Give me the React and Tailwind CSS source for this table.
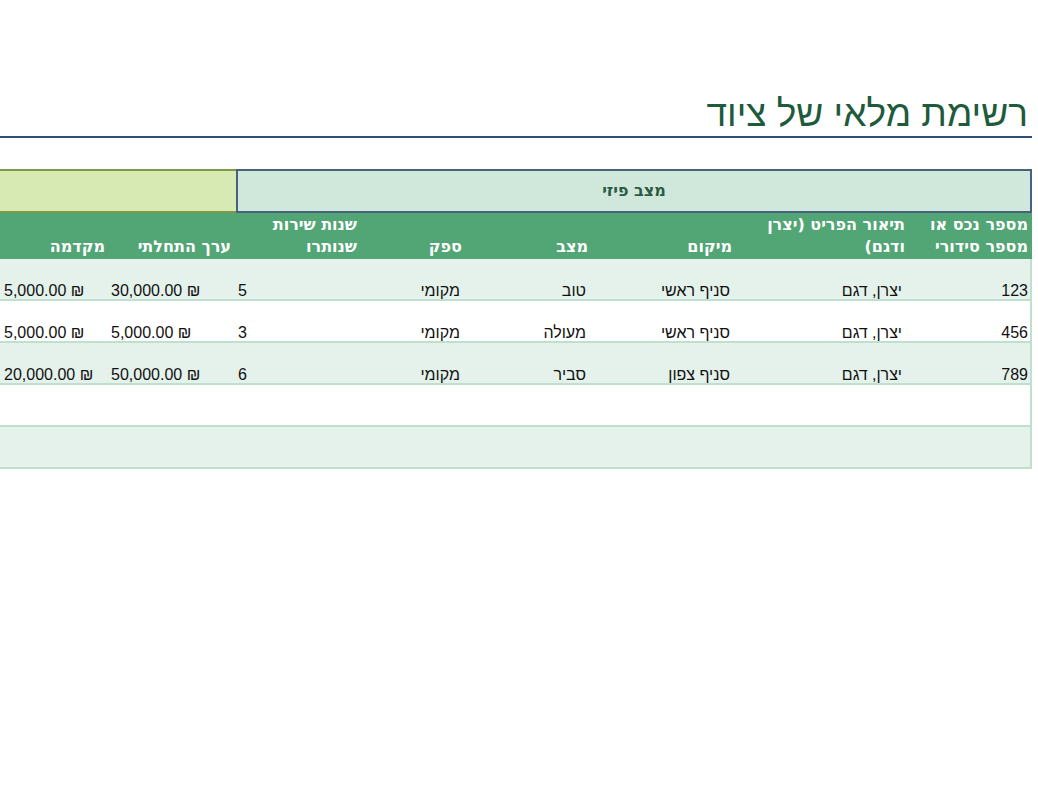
import React from "react";

const cols = "grid grid-cols-[123px_173px_144px_126px_104px_126px_126px_110px]";

const rows = [
  ["123", "יצרן, דגם", "סניף ראשי", "טוב", "מקומי", "5", "30,000.00 ₪", "5,000.00 ₪"],
  ["456", "יצרן, דגם", "סניף ראשי", "מעולה", "מקומי", "3", "5,000.00 ₪", "5,000.00 ₪"],
  ["789", "יצרן, דגם", "סניף צפון", "סביר", "מקומי", "6", "50,000.00 ₪", "20,000.00 ₪"],
  ["", "", "", "", "", "", "", ""],
  ["", "", "", "", "", "", "", ""],
];

const headFont = { fontFamily: '"DejaVu Sans", "Liberation Sans", sans-serif' };

export default function App() {
  return (
    <div
      dir="rtl"
      className="w-[1038px] h-[800px] bg-white overflow-hidden"
      style={{ fontFamily: '"Liberation Sans", "DejaVu Sans", sans-serif' }}
    >
      <div className="w-[1032px] mr-[6px] pt-[92px]">
        <h1 className="text-[37px] leading-[44px] text-[#1e5a3c] pr-[4px] font-normal">
          רשימת מלאי של ציוד
        </h1>
        <div className="h-[2px] bg-[#2f4c7c]" />
        <div className="mt-[31px] flex h-[44px]">
          <div
            className="w-[796px] bg-[#d0e8dc] border-2 border-[#46627c] flex items-center justify-center text-[16px] font-bold text-[#2c5a44]"
            style={headFont}
          >
            מצב פיזי
          </div>
          <div className="w-[236px] bg-[#d8eab4] border-y-2 border-[#7f9a45]" />
        </div>
        <div
          className={`${cols} bg-[#52a575] h-[46px] text-white font-bold text-[16px] leading-[22px]`}
          style={headFont}
        >
          <div className="flex items-end pr-[4px] pb-[1px]">מספר נכס או מספר סידורי</div>
          <div className="flex items-end pr-[4px] pb-[1px]">תיאור הפריט (יצרן ודגם)</div>
          <div className="flex items-end pr-[4px] pb-[1px]">מיקום</div>
          <div className="flex items-end pr-[4px] pb-[1px]">מצב</div>
          <div className="flex items-end pr-[4px] pb-[1px]">ספק</div>
          <div className="flex items-end pr-[5px] pb-[1px]">שנות שירות שנותרו</div>
          <div className="flex items-end pr-[5px] pb-[1px]">ערך התחלתי</div>
          <div className="flex items-end pr-[5px] pb-[1px]">מקדמה</div>
        </div>
        {rows.map((r, i) => (
          <div
            key={i}
            className={`${cols} h-[42px] border-b-2 border-r-2 border-[#bfe0cd] text-[16px] leading-[16px] text-[#111] ${
              i % 2 === 0 ? "bg-[#e4f2eb]" : "bg-white"
            }`}
          >
            <div className="flex items-end pr-[2px]">{r[0]}</div>
            <div className="flex items-end pr-[5px]">{r[1]}</div>
            <div className="flex items-end pr-[4px]">{r[2]}</div>
            <div className="flex items-end pr-[4px]">{r[3]}</div>
            <div className="flex items-end pr-[4px]">{r[4]}</div>
            <div className="flex items-end justify-end pl-[4px]">{r[5]}</div>
            <div className="flex items-end pl-[3px]" dir="ltr">
              <span className="w-full text-left">{r[6]}</span>
            </div>
            <div className="flex items-end pl-[6px]" dir="ltr">
              <span className="w-full text-left">{r[7]}</span>
            </div>
          </div>
        ))}
      </div>
    </div>
  );
}
